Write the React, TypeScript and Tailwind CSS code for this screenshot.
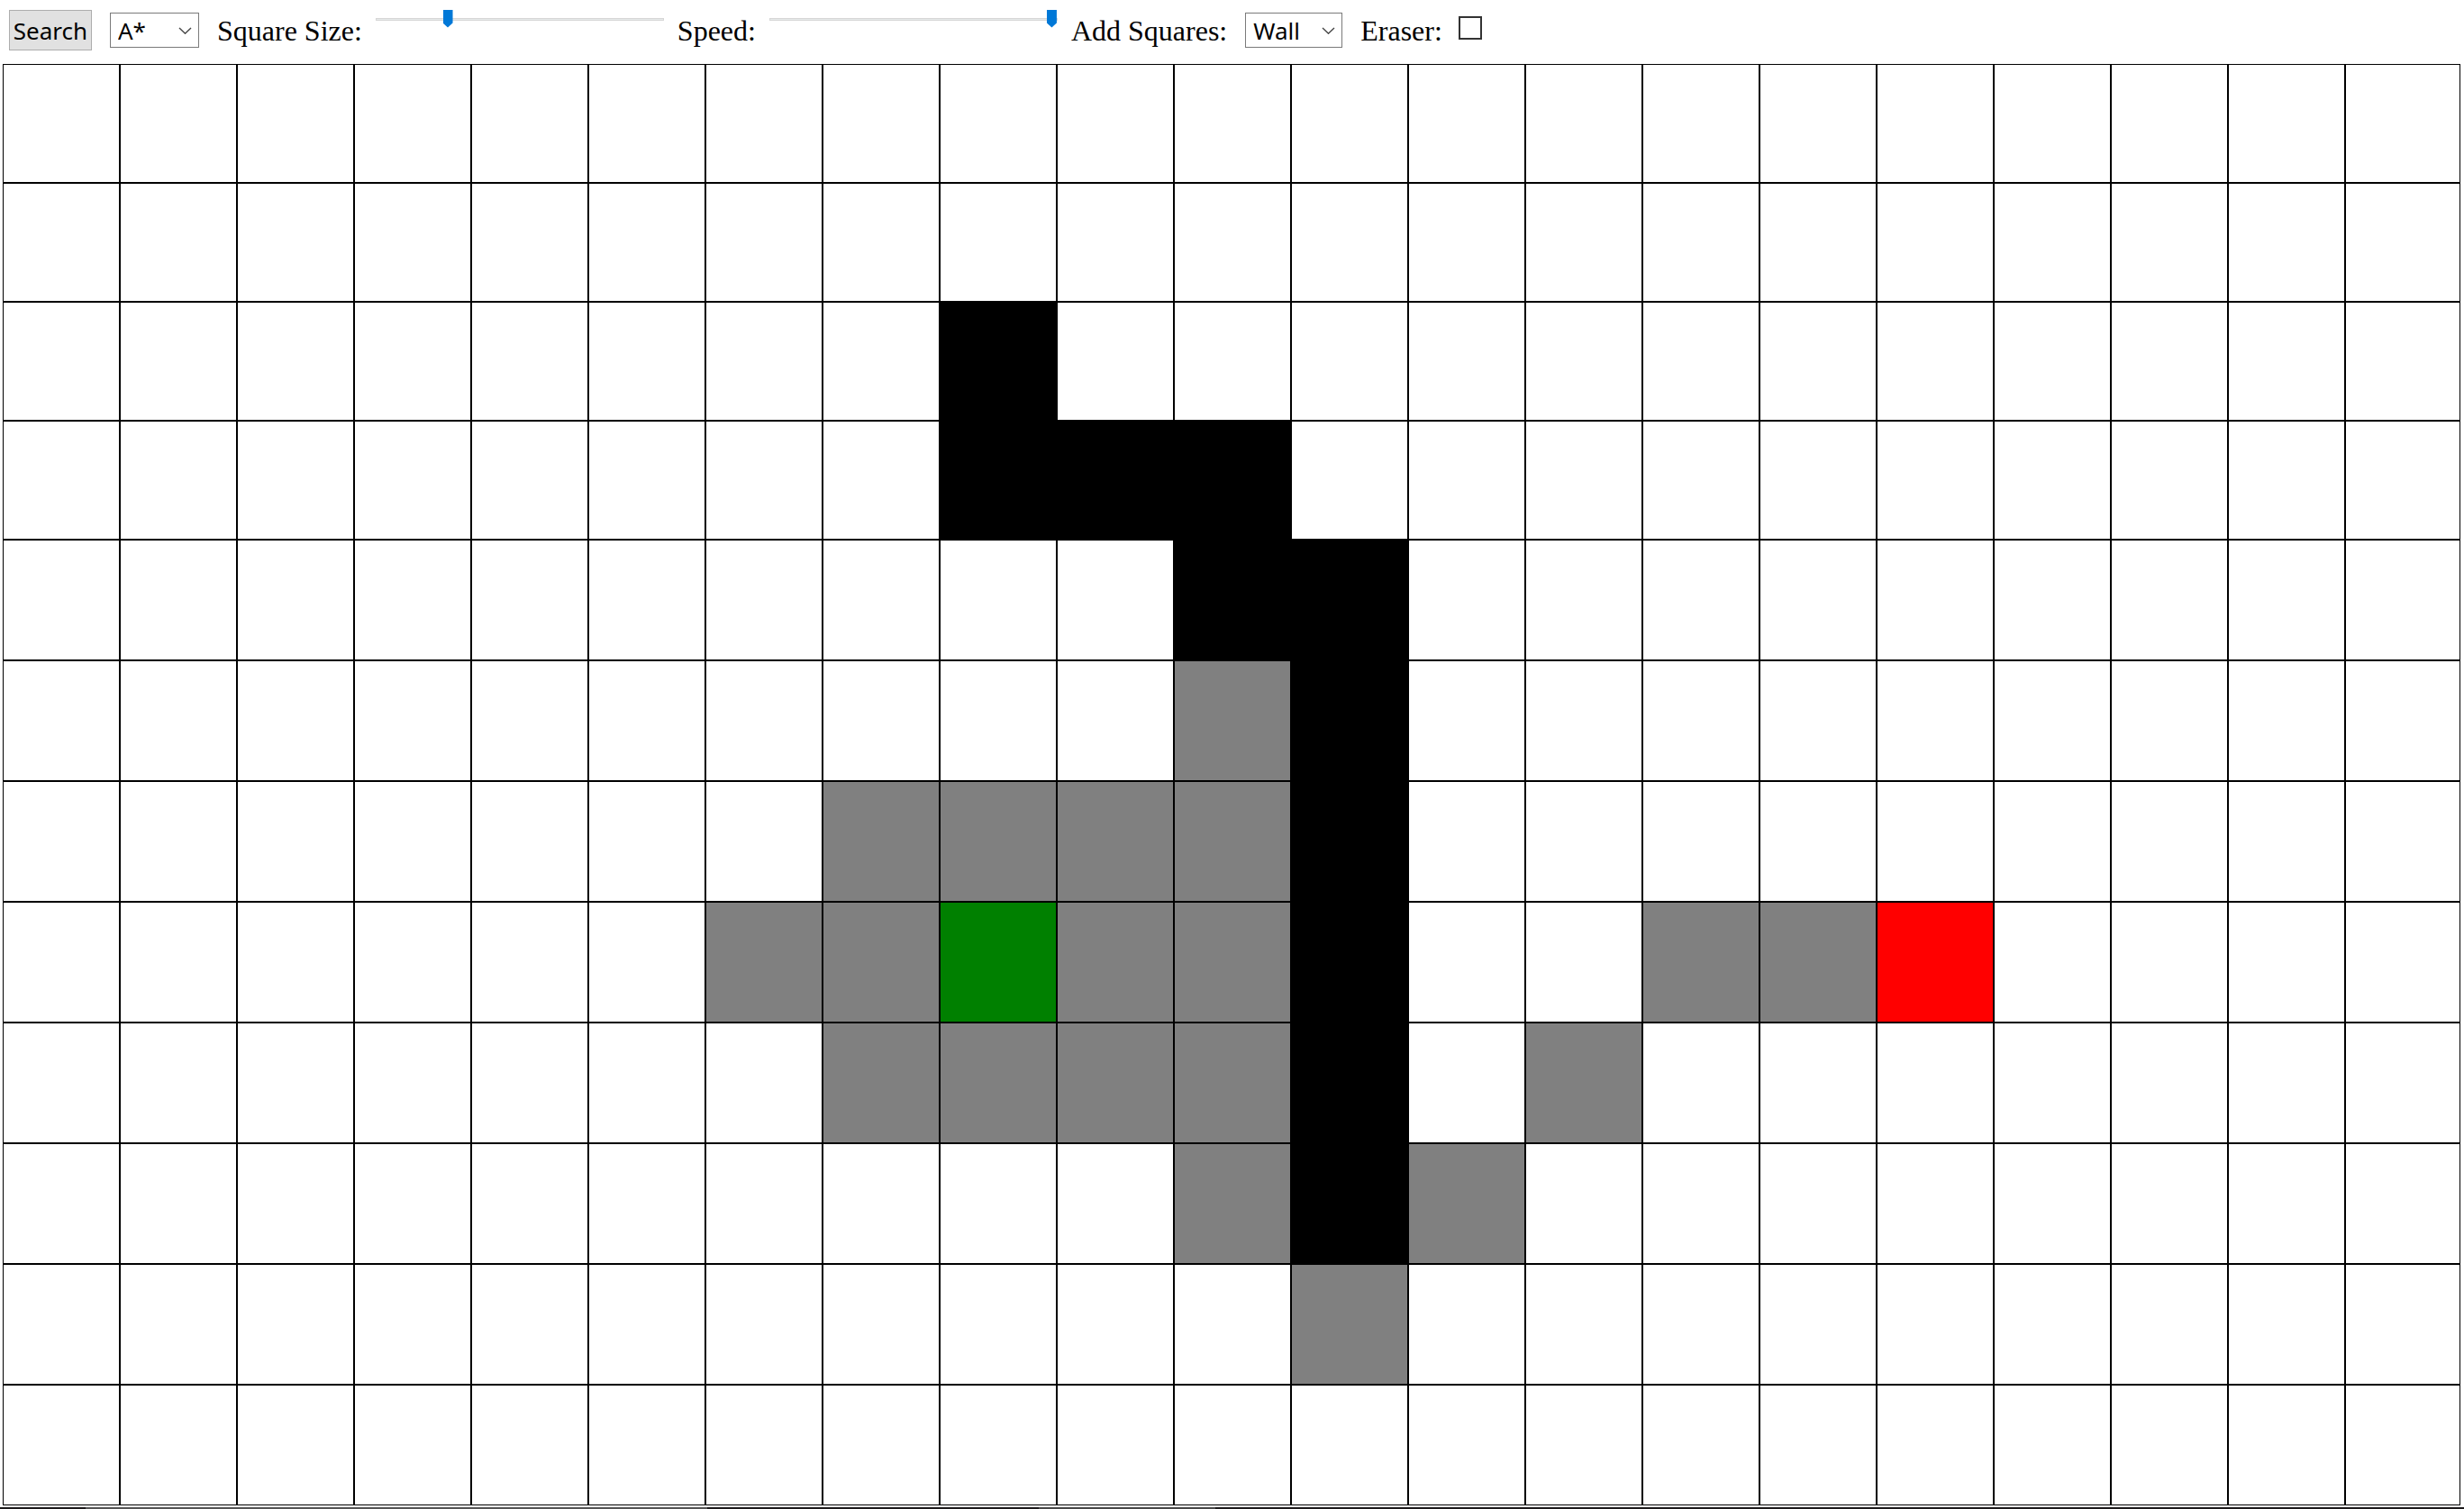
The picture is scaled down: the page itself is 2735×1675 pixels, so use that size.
import { useState } from "react";
import type { ReactNode } from "react";

// "." empty, "W" wall, "V" visited, "S" start, "G" goal
const BOARD = [
  ".....................",
  ".....................",
  "........W............",
  "........WWW..........",
  "..........WW.........",
  "..........VW.........",
  ".......VVVVW.........",
  "......VVSVVW..VVG....",
  ".......VVVVW.V.......",
  "..........VWV........",
  "...........V.........",
  ".....................",
];

const CELL_COLORS: Record<string, string> = {
  ".": "bg-white",
  W: "bg-black",
  V: "bg-[#808080]",
  S: "bg-[#008000]",
  G: "bg-[#ff0000]",
};

const UI_FONT = "font-['Noto_Sans','Open_Sans',sans-serif] text-[26px] leading-8";

const SLIDER =
  "block h-5 w-80 cursor-pointer appearance-none self-start bg-transparent " +
  "[&::-webkit-slider-runnable-track]:h-[3px] [&::-webkit-slider-runnable-track]:border [&::-webkit-slider-runnable-track]:border-[#d6d6d6] [&::-webkit-slider-runnable-track]:bg-[#e7eaea] " +
  "[&::-webkit-slider-thumb]:-mt-2.5 [&::-webkit-slider-thumb]:h-5 [&::-webkit-slider-thumb]:w-[11px] [&::-webkit-slider-thumb]:appearance-none [&::-webkit-slider-thumb]:bg-[#0078d7] [&::-webkit-slider-thumb]:[clip-path:polygon(0_0,100%_0,100%_75%,50%_100%,0_75%)]";

function Select(props: {
  id: string;
  label?: string;
  width: string;
  options: string[];
}): ReactNode {
  return (
    <div className={`relative ${props.width}`}>
      <select
        id={props.id}
        aria-label={props.label}
        className={`block h-[39px] w-full appearance-none border border-[#7a7a7a] bg-white pl-2 ${UI_FONT}`}
      >
        {props.options.map((option) => (
          <option key={option}>{option}</option>
        ))}
      </select>
      <svg
        className="pointer-events-none absolute top-4 right-2 h-2 w-[15px]"
        viewBox="0 0 15 8"
        fill="none"
        stroke="#444"
        strokeWidth="1.4"
      >
        <path d="M1 1 L7.5 7.2 L14 1" />
      </svg>
    </div>
  );
}

export default function App() {
  const [size, setSize] = useState(24);
  const [speed, setSpeed] = useState(100);
  const [eraser, setEraser] = useState(false);

  return (
    <div className="flex min-h-screen flex-col bg-white text-black">
      <header className="flex items-center gap-5 px-2.5 pt-[11px] pb-[15px] font-['Liberation_Serif',serif] text-[32px] leading-8 whitespace-nowrap">
        <button
          type="button"
          className={`h-[45px] w-[92px] border border-[#adadad] bg-[#e1e1e1] text-center ${UI_FONT}`}
        >
          Search
        </button>
        <Select
          id="algorithm"
          label="Algorithm"
          width="w-[99px]"
          options={["A*", "BFS", "DFS"]}
        />
        <div className="flex items-center gap-[15px] self-stretch">
          <label htmlFor="size">Square Size:</label>
          <input
            id="size"
            type="range"
            min={0}
            max={100}
            value={size}
            onChange={(e) => setSize(Number(e.target.value))}
            className={SLIDER}
          />
          <label htmlFor="speed">Speed:</label>
          <input
            id="speed"
            type="range"
            min={0}
            max={100}
            value={speed}
            onChange={(e) => setSpeed(Number(e.target.value))}
            className={SLIDER}
          />
          <label htmlFor="brush">Add Squares:</label>
        </div>
        <Select id="brush" width="w-[108px]" options={["Wall", "Start", "Goal"]} />
        <div className="flex items-center gap-[18px]">
          <label htmlFor="eraser">Eraser:</label>
          <input
            id="eraser"
            type="checkbox"
            checked={eraser}
            onChange={(e) => setEraser(e.target.checked)}
            className="mb-1.5 size-[26px] appearance-none border-2 border-[#333] bg-white checked:bg-[#333]"
          />
        </div>
      </header>

      <main className="mr-1 mb-0.5 ml-[3px] grid flex-1 grid-cols-[repeat(20,130fr)_128fr] grid-rows-[repeat(4,132fr)_repeat(8,134fr)]">
        {BOARD.flatMap((row, y) =>
          row.split("").map((cell, x) => (
            <div
              key={`${x}-${y}`}
              className={`min-h-4 border border-black ${CELL_COLORS[cell]}`}
            />
          )),
        )}
      </main>

      <footer className="flex h-0.5 bg-[#1c1a1b]">
        <div className="w-[95px]" />
        <div className="w-[690px] bg-[#555]" />
        <div className="w-[368px]" />
        <div className="w-[196px] bg-[#484848]" />
      </footer>
    </div>
  );
}
